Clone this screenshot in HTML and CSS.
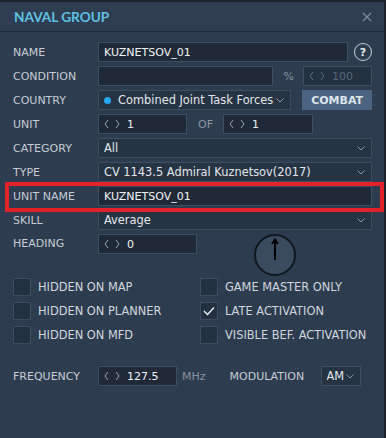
FILE: index.html
```html
<!DOCTYPE html>
<html lang="en">
<head>
    <meta charset="UTF-8">
    <title>Naval Group</title>
    <link rel="stylesheet" href="styles.css">
</head>
<body>
    <div class="panel">
        <div class="header">
            <span class="title">NAVAL GROUP</span>
            <span class="close"><svg width="10" height="10" viewBox="0 0 10 10"><line x1="1" y1="1" x2="9" y2="9"/><line x1="9" y1="1" x2="1" y2="9"/></svg></span>
        </div>
        <div class="form">
            <div class="row">
                <span class="label">NAME</span>
                <div class="input name-input">KUZNETSOV_01</div>
                <span class="help">?</span>
            </div>
            <div class="row">
                <span class="label">CONDITION</span>
                <div class="input cond-input"></div>
                <span class="unit pct">%</span>
                <div class="spinner disabled cond-spin">
                    <span class="arrows"><svg width="16" height="10" viewBox="0 0 16 10"><polyline points="4,1 1,5 4,9"/><polyline points="12,1 15,5 12,9"/></svg></span>
                    <span class="val">100</span>
                </div>
            </div>
            <div class="row">
                <span class="label">COUNTRY</span>
                <div class="select country">
                    <span class="dot"></span>
                    <span class="sel-text">Combined Joint Task Forces</span>
                    <span class="chev"><svg width="8" height="5" viewBox="0 0 8 5"><polyline points="0.5,0.5 4,4 7.5,0.5"/></svg></span>
                </div>
                <button class="combat">COMBAT</button>
            </div>
            <div class="row">
                <span class="label">UNIT</span>
                <div class="spinner unit-spin">
                    <span class="arrows"><svg width="16" height="10" viewBox="0 0 16 10"><polyline points="4,1 1,5 4,9"/><polyline points="12,1 15,5 12,9"/></svg></span>
                    <span class="val">1</span>
                </div>
                <span class="of">OF</span>
                <div class="spinner unit-spin2">
                    <span class="arrows"><svg width="16" height="10" viewBox="0 0 16 10"><polyline points="4,1 1,5 4,9"/><polyline points="12,1 15,5 12,9"/></svg></span>
                    <span class="val">1</span>
                </div>
            </div>
            <div class="row">
                <span class="label">CATEGORY</span>
                <div class="select wide">
                    <span class="sel-text">All</span>
                    <span class="chev"><svg width="8" height="5" viewBox="0 0 8 5"><polyline points="0.5,0.5 4,4 7.5,0.5"/></svg></span>
                </div>
            </div>
            <div class="row">
                <span class="label">TYPE</span>
                <div class="select wide">
                    <span class="sel-text">CV 1143.5 Admiral Kuznetsov(2017)</span>
                    <span class="chev"><svg width="8" height="5" viewBox="0 0 8 5"><polyline points="0.5,0.5 4,4 7.5,0.5"/></svg></span>
                </div>
            </div>
            <div class="row highlight">
                <span class="label">UNIT NAME</span>
                <div class="input wide">KUZNETSOV_01</div>
            </div>
            <div class="row">
                <span class="label">SKILL</span>
                <div class="select wide">
                    <span class="sel-text">Average</span>
                    <span class="chev"><svg width="8" height="5" viewBox="0 0 8 5"><polyline points="0.5,0.5 4,4 7.5,0.5"/></svg></span>
                </div>
            </div>
            <div class="row heading-row">
                <span class="label">HEADING</span>
                <div class="spinner heading-spin">
                    <span class="arrows"><svg width="16" height="10" viewBox="0 0 16 10"><polyline points="4,1 1,5 4,9"/><polyline points="12,1 15,5 12,9"/></svg></span>
                    <span class="val">0</span>
                </div>
                <div class="compass">
                    <svg width="42" height="42" viewBox="0 0 42 42">
                        <circle cx="21" cy="21" r="20" class="dial"/>
                        <line x1="21" y1="26" x2="21" y2="6" class="needle"/>
                        <polyline points="18,10 21,5.5 24,10" class="needle"/>
                    </svg>
                </div>
            </div>

            <div class="checks">
                <label class="check"><span class="box"></span>HIDDEN ON MAP</label>
                <label class="check"><span class="box"></span>GAME MASTER ONLY</label>
                <label class="check"><span class="box"></span>HIDDEN ON PLANNER</label>
                <label class="check"><span class="box"><svg width="12" height="10" viewBox="0 0 12 10"><polyline points="1,5 4.5,8.5 11,1.5"/></svg></span>LATE ACTIVATION</label>
                <label class="check"><span class="box"></span>HIDDEN ON MFD</label>
                <label class="check"><span class="box"></span>VISIBLE BEF. ACTIVATION</label>
            </div>

            <div class="row freq-row">
                <span class="label">FREQUENCY</span>
                <div class="spinner freq-spin">
                    <span class="arrows"><svg width="16" height="10" viewBox="0 0 16 10"><polyline points="4,1 1,5 4,9"/><polyline points="12,1 15,5 12,9"/></svg></span>
                    <span class="val">127.5</span>
                </div>
                <span class="unit mhz">MHz</span>
                <span class="mod-label">MODULATION</span>
                <div class="select mod">
                    <span class="sel-text">AM</span>
                    <span class="chev"><svg width="8" height="5" viewBox="0 0 8 5"><polyline points="0.5,0.5 4,4 7.5,0.5"/></svg></span>
                </div>
            </div>
        </div>
    </div>
</body>
</html>
```

FILE: styles.css
```css
body {
    margin: 0;
    background-color: #1b222b;
    font-family: "DejaVu Sans", sans-serif;
    font-size: 11px;
    color: #c7ccd3;
}
.panel {
    margin-top: 2px;
    width: 384px;
    height: 436px;
    background-color: #2d3c4f;
}
.header {
    height: 29px;
    display: flex;
    align-items: center;
    justify-content: space-between;
    padding: 0 12px 0 14px;
    background-color: #2e3d50;
    border-bottom: 1px solid #1f2833;
}
.title {
    font-family: Lato, sans-serif;
    font-weight: 700;
    font-size: 13.6px;
    color: #5ec2e4;
}
.close svg {
    display: block;
    stroke: #7e8a98;
    stroke-width: 1.2;
}
.form {
    padding: 10px 12px 0 13px;
}
.row {
    display: flex;
    align-items: center;
    height: 20px;
    margin-bottom: 4px;
}
.label {
    width: 85px;
    flex: none;
}
.input, .spinner, .select {
    box-sizing: border-box;
    height: 20px;
    border: 1px solid #3e4e61;
    background-color: #1f2937;
    color: #f2f4f7;
    display: flex;
    align-items: center;
    padding: 0 5px;
}
.select {
    background-color: #253343;
    color: #e3e7ec;
    padding: 0 6px 0 5px;
    font-size: 11.4px;
}
.name-input { width: 252px; }
.wide { width: 275px; }
.cond-input { width: 178px; }
.help {
    width: 16px;
    height: 16px;
    border: 1.5px solid #c9d0d8;
    border-radius: 50%;
    margin-left: 6px;
    color: #e8ecf0;
    font-weight: 700;
    font-size: 11px;
    display: flex;
    align-items: center;
    justify-content: center;
}
.unit {
    color: #8793a1;
}
.pct {
    margin: 0 9px 0 10px;
}
.spinner .arrows svg {
    display: block;
    fill: none;
    stroke: #9aa5b2;
    stroke-width: 1;
}
.spinner .arrows {
    margin-right: 7px;
}
.spinner.disabled {
    background-color: #243141;
}
.spinner.disabled .val {
    color: #56657a;
}
.spinner.disabled .arrows svg {
    stroke: #5b6a7d;
}
.cond-spin { width: 70px; }
.unit-spin { width: 89px; }
.unit-spin2 { width: 90px; }
.heading-spin { width: 99px; }
.freq-spin { width: 79px; }
.of {
    color: #8c97a4;
    margin: 0 10px 0 11px;
}
.country {
    width: 194px;
}
.dot {
    width: 7px;
    height: 7px;
    border-radius: 50%;
    background-color: #24a8f0;
    margin-right: 7px;
    flex: none;
}
.sel-text {
    flex: 1;
    white-space: nowrap;
    overflow: hidden;
}
.chev svg {
    display: block;
    fill: none;
    stroke: #8d98a6;
    stroke-width: 1;
}
.combat {
    margin-left: 11px;
    width: 70px;
    height: 20px;
    border: none;
    background-color: #4a6482;
    color: #dce4ec;
    font-family: "DejaVu Sans", sans-serif;
    font-weight: 700;
    font-size: 11px;
    padding: 0;
}
.highlight {
    position: relative;
}
.highlight::after {
    content: '';
    position: absolute;
    top: -4px;
    bottom: -6px;
    left: -8px;
    right: -12px;
    border: 4px solid #e1222b;
    box-sizing: border-box;
}
.heading-row {
    height: 42px;
    align-items: flex-start;
    margin-bottom: 2px;
}
.heading-row .label {
    line-height: 20px;
}
.compass {
    margin-left: 57px;
}
.compass svg {
    display: block;
}
.dial {
    fill: #3a4b60;
    stroke: #11171e;
    stroke-width: 2;
}
.needle {
    fill: none;
    stroke: #000;
    stroke-width: 2;
}
.checks {
    display: grid;
    grid-template-columns: 187px auto;
    row-gap: 6px;
}
.check {
    display: flex;
    align-items: center;
    height: 18px;
    color: #d2d7de;
    font-size: 11.4px;
}
.box {
    box-sizing: border-box;
    width: 18px;
    height: 18px;
    border: 1px solid #3d4c5e;
    background-color: #233040;
    margin-right: 7px;
    display: flex;
    align-items: center;
    justify-content: center;
}
.box svg {
    fill: none;
    stroke: #e8ecf0;
    stroke-width: 1.5;
}
.freq-row {
    margin-top: 22px;
}
.mhz {
    margin-left: 5px;
}
.mod-label {
    margin-left: 24px;
    width: 91px;
}
.mod {
    width: 40px;
}
```
